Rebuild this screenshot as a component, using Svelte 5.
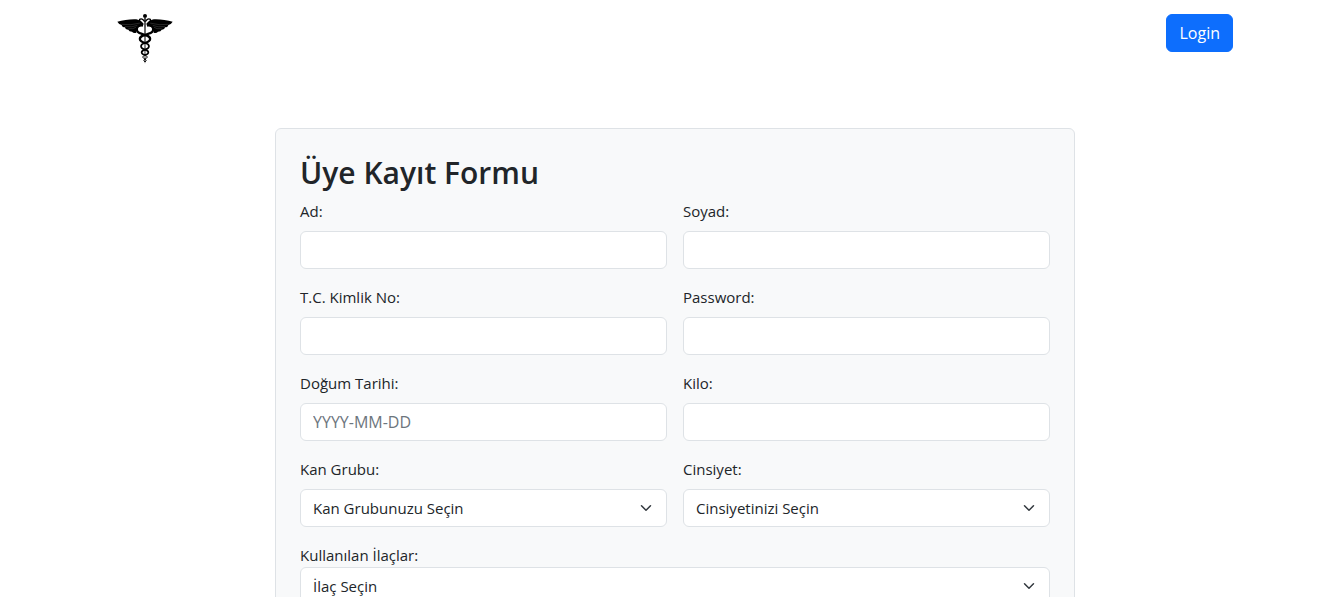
<script>
	const bloodGroups = ['A Rh+', 'A Rh-', 'B Rh+', 'B Rh-', 'AB Rh+', 'AB Rh-', '0 Rh+', '0 Rh-'];
	const genders = ['Kadın', 'Erkek'];

	const fields = [
		{ id: 'ad', label: 'Ad:', type: 'text' },
		{ id: 'soyad', label: 'Soyad:', type: 'text' },
		{ id: 'tc', label: 'T.C. Kimlik No:', type: 'text' },
		{ id: 'password', label: 'Password:', type: 'password' },
		{ id: 'dogum', label: 'Doğum Tarihi:', type: 'text', placeholder: 'YYYY-MM-DD' },
		{ id: 'kilo', label: 'Kilo:', type: 'text' },
		{ id: 'kan', label: 'Kan Grubu:', empty: 'Kan Grubunuzu Seçin', options: bloodGroups },
		{ id: 'cinsiyet', label: 'Cinsiyet:', empty: 'Cinsiyetinizi Seçin', options: genders }
	];
</script>

<div class="page">
	<header class="navbar">
		<a class="brand" href="#home" aria-label="Home">
			<svg viewBox="21 21 168 156" width="56" height="52" aria-hidden="true">
				<circle cx="105" cy="33" r="6" />
				<path d="M103 39h4l-1 132-1 5-1-5z" />
				<!-- wings -->
				<path d="M22 50C40 46 68 41 84 44Q95 47 101 56L98 65Q88 63 82 70Q78 75 79 83Q71 86 66 80Q57 80 55 74Q46 74 45 67Q36 67 35 60Q27 59 22 50Z" />
				<path d="M188 50C170 46 142 41 126 44Q115 47 109 56L112 65Q122 63 128 70Q132 75 131 83Q139 86 144 80Q153 80 155 74Q164 74 165 67Q174 67 175 60Q183 59 188 50Z" />
				<g class="feathers">
					<path d="M35 58Q62 62 91 54M45 65Q66 68 86 60M55 71Q69 74 82 65" />
					<path d="M175 58Q148 62 119 54M165 65Q144 68 124 60M155 71Q141 74 128 65" />
				</g>
				<!-- snakes, thinner towards the tails -->
				<g class="snakes">
					<path d="M104 50Q96 38 89 43Q86 49 96 55M106 50Q114 38 121 43Q124 49 114 55" stroke-width="4" />
					<path d="M96 57C74 64 77 83 94 86L105 90C125 95 126 108 105 114" stroke-width="7" />
					<path d="M114 57C136 64 133 83 116 86L105 90C85 95 84 108 105 114" stroke-width="7" />
					<path d="M105 114C89 118 89 129 105 134C119 138 118 147 105 150" stroke-width="5" />
					<path d="M105 114C121 118 121 129 105 134C91 138 92 147 105 150" stroke-width="5" />
					<path d="M105 150C96 154 97 159 105 162Q112 166 105 171" stroke-width="3" />
					<path d="M105 150C114 154 113 159 105 162Q98 166 105 171" stroke-width="3" />
				</g>
			</svg>
		</a>
		<button type="button" class="login">Login</button>
	</header>

	<main class="card">
		<h2>Üye Kayıt Formu</h2>
		<form>
			<div class="grid">
				{#each fields as field (field.id)}
					<div class="field">
						<label for={field.id}>{field.label}</label>
						{#if field.options}
							<select id={field.id} class="control">
								<option value="">{field.empty}</option>
								{#each field.options as option}
									<option>{option}</option>
								{/each}
							</select>
						{:else}
							<input id={field.id} class="control" type={field.type} placeholder={field.placeholder} />
						{/if}
					</div>
				{/each}
			</div>
			<div class="medicines">
				<label for="ilac">Kullanılan İlaçlar:</label>
				<select id="ilac" class="control">
					<option value="">İlaç Seçin</option>
				</select>
			</div>
		</form>
	</main>
</div>

<style>
	:global(body) {
		background: #fff;
		color: #212529;
		font-family: "Segoe UI", "Open Sans", "Noto Sans", sans-serif;
		font-size: 15px;
		line-height: 24px;
	}
	.page, .page * {
		box-sizing: border-box;
	}
	.page {
		height: 100vh;
		overflow: hidden;
		padding-left: 8px;
	}
	.navbar {
		display: flex;
		justify-content: space-between;
		align-items: flex-start;
		max-width: 1140px;
		margin: 0 auto;
		padding: 12px 12px 0;
	}
	.brand {
		display: block;
		color: #000;
	}
	.brand svg {
		display: block;
	}
	.feathers path {
		fill: none;
		stroke: #777;
		stroke-width: 1;
	}
	.snakes path {
		fill: none;
		stroke: #000;
	}
	.login {
		margin-top: 2px;
		padding: 6px 12px;
		border: 1px solid #0d6efd;
		border-radius: 6px;
		background: #0d6efd;
		color: #fff;
		font: inherit;
		font-size: 16px;
		cursor: pointer;
	}
	.card {
		max-width: 800px;
		margin: 64px auto 0;
		padding: 24px;
		border: 1px solid #dee2e6;
		border-radius: 6px;
		background: #f8f9fa;
	}
	h2 {
		margin: 0 0 6px;
		font-size: 30px;
		font-weight: 600;
		line-height: 40px;
	}
	.grid {
		display: grid;
		grid-template-columns: 1fr 1fr;
		gap: 16px;
		margin-bottom: 16px;
	}
	label {
		display: block;
	}
	.field label {
		margin-bottom: 8px;
	}
	.control {
		display: block;
		width: 100%;
		height: 38px;
		padding: 6px 12px;
		border: 1px solid #dee2e6;
		border-radius: 6px;
		background-color: #fff;
		color: #212529;
		font: inherit;
		appearance: none;
	}
	.control::placeholder {
		color: #6c757d;
		font-size: 16px;
		opacity: 1;
	}
	select.control {
		padding-right: 36px;
		background-image: url("data:image/svg+xml,%3csvg xmlns='http://www.w3.org/2000/svg' viewBox='0 0 16 16'%3e%3cpath fill='none' stroke='%23343a40' stroke-linecap='round' stroke-linejoin='round' stroke-width='2' d='m2 5 6 6 6-6'/%3e%3c/svg%3e");
		background-repeat: no-repeat;
		background-position: right 12px center;
		background-size: 16px 12px;
	}
</style>
